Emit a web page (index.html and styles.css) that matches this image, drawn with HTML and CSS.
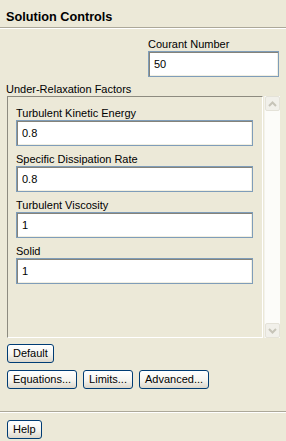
FILE: index.html
```html
<!DOCTYPE html>
<html>
<head>
    <title>Solution Controls</title>
    <link rel="stylesheet" href="styles.css">
</head>
<body>
    <div class="panel-header">
        <h1 class="panel-title">Solution Controls</h1>
    </div>
    <div class="separator"></div>

    <div class="courant-group">
        <label class="field-label">Courant Number</label>
        <input class="text-input courant-input" type="text" value="50">
    </div>

    <div class="section-label">Under-Relaxation Factors</div>
    <div class="factors">
        <div class="factors-frame">
            <div class="factor-field">
                <label class="field-label">Turbulent Kinetic Energy</label>
                <input class="text-input" type="text" value="0.8">
            </div>
            <div class="factor-field">
                <label class="field-label">Specific Dissipation Rate</label>
                <input class="text-input" type="text" value="0.8">
            </div>
            <div class="factor-field">
                <label class="field-label">Turbulent Viscosity</label>
                <input class="text-input" type="text" value="1">
            </div>
            <div class="factor-field">
                <label class="field-label">Solid</label>
                <input class="text-input" type="text" value="1">
            </div>
        </div>
        <div class="scrollbar">
            <div class="scroll-button">
                <svg width="9" height="6" viewBox="0 0 9 6"><path d="M1 5 L4.5 1.5 L8 5" fill="none" stroke="#c6c4b8" stroke-width="2"/></svg>
            </div>
            <div class="scroll-track"></div>
            <div class="scroll-button">
                <svg width="9" height="6" viewBox="0 0 9 6"><path d="M1 1 L4.5 4.5 L8 1" fill="none" stroke="#c6c4b8" stroke-width="2"/></svg>
            </div>
        </div>
    </div>

    <div class="button-row button-row-default">
        <button class="xp-button">Default</button>
    </div>
    <div class="button-row button-row-tools">
        <button class="xp-button">Equations...</button>
        <button class="xp-button">Limits...</button>
        <button class="xp-button">Advanced...</button>
    </div>

    <div class="separator separator-bottom"></div>
    <div class="button-row button-row-help">
        <button class="xp-button">Help</button>
    </div>
</body>
</html>
```

FILE: styles.css
```css
:root {
    --panel-background: #ece9d8;
    --input-border: #7f9db9;
    --button-border: #003c74;
    --separator-color: #aca899;
}

html, body {
    margin: 0;
    padding: 0;
    width: 100%;
    height: 100%;
    background: var(--panel-background);
    font-family: 'Liberation Sans', Arial, sans-serif;
    font-size: 11px;
    color: #000;
    overflow: hidden;
}

* {
    box-sizing: border-box;
}

.panel-header {
    height: 27px;
    padding: 10px 6px 0 6px;
}

.panel-title {
    margin: 0;
    font-size: 12.7px;
    font-weight: bold;
    line-height: 15px;
}

.separator {
    height: 2px;
    border-top: 1px solid var(--separator-color);
    border-bottom: 1px solid #fff;
}

.courant-group {
    margin: 8px 0 0 148px;
    width: 131px;
}

.field-label {
    display: block;
    line-height: 13px;
    white-space: nowrap;
}

.courant-group .field-label {
    line-height: 14px;
}

.text-input {
    display: block;
    width: 237px;
    height: 26px;
    margin: 0;
    padding: 0 0 0 5px;
    border: 1px solid var(--input-border);
    box-shadow: inset 1px 1px 0 #85837a, inset -1px -1px 0 #f1efe2;
    background: #fff;
    font-family: inherit;
    font-size: 11px;
    color: #000;
    outline: none;
}

.courant-input {
    width: 131px;
}

.section-label {
    margin: 6px 0 0 6px;
    line-height: 13px;
}

.factors {
    display: flex;
    gap: 1px;
    margin-left: 7px;
    height: 242px;
}

.factors-frame {
    width: 256px;
    padding: 10px 0 0 8px;
    border-top: 1px solid #8d8b80;
    border-left: 1px solid #8d8b80;
    border-right: 1px solid #fff;
    border-bottom: 1px solid #fff;
}

.factor-field {
    margin-bottom: 7px;
}

.scrollbar {
    width: 16px;
    display: flex;
    flex-direction: column;
    background: #fcfcf9;
    border-left: 1px solid #f3f2ec;
}

.scroll-track {
    flex: 1;
}

.scroll-button {
    height: 15px;
    display: flex;
    align-items: center;
    justify-content: center;
    background: #f1f0ea;
    border: 1px solid #e4e2d8;
    border-radius: 2px;
}

.button-row {
    display: flex;
    gap: 7px;
    padding-left: 7px;
}

.button-row-default {
    margin-top: 6px;
}

.button-row-tools {
    margin-top: 7px;
    gap: 6px;
}

.separator-bottom {
    margin-top: 22px;
}

.button-row-help {
    margin-top: 7px;
}

.xp-button {
    height: 19px;
    margin: 0;
    padding: 0 5px;
    border: 1px solid var(--button-border);
    border-radius: 3px;
    background: linear-gradient(#ffffff, #f5f4ef 55%, #dcd7cb);
    font-family: inherit;
    font-size: 11px;
    line-height: 15px;
    color: #000;
}
```
